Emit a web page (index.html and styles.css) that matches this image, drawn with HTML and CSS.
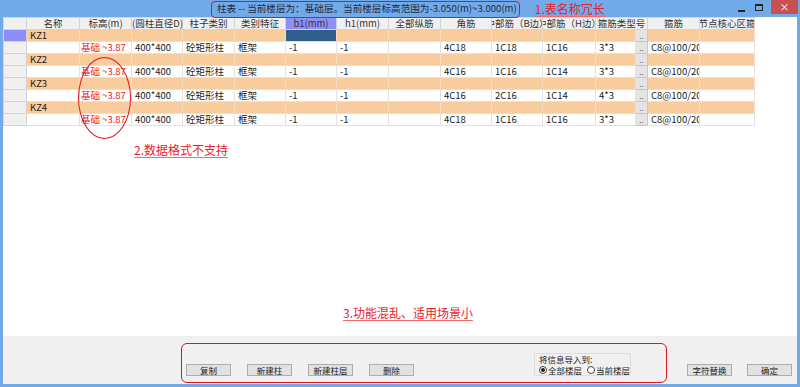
FILE: index.html
```html
<!DOCTYPE html>
<html lang="zh-CN">
<head>
    <meta charset="UTF-8">
    <title>柱表</title>
    <link rel="stylesheet" href="styles.css">
</head>
<body>
    <div class="window">
        <div class="titlebar">
            <span class="title">柱表 -- 当前楼层为：基础层。当前楼层标高范围为-3.050(m)~3.000(m)</span>
            <span class="note note-1">1.表名称冗长</span>
            <div class="controls">
                <span class="ctl-min"></span>
                <span class="ctl-max"></span>
                <span class="ctl-close">×</span>
            </div>
        </div>

        <div class="grid-area">
            <table class="grid">
                <colgroup>
                    <col style="width:23px"><col style="width:53px"><col style="width:52px"><col style="width:51px">
                    <col style="width:52px"><col style="width:51px"><col style="width:51px"><col style="width:52px">
                    <col style="width:52px"><col style="width:51px"><col style="width:51px"><col style="width:53px">
                    <col style="width:40px"><col style="width:12px"><col style="width:52px"><col style="width:55px">
                </colgroup>
                <thead>
                    <tr>
                        <th class="rh"></th>
                        <th>名称</th>
                        <th>标高(m)</th>
                        <th>(圆柱直径D)</th>
                        <th>柱子类别</th>
                        <th>类别特征</th>
                        <th class="sel-col">b1(mm)</th>
                        <th>h1(mm)</th>
                        <th>全部纵筋</th>
                        <th>角筋</th>
                        <th class="clip"><div class="hc">中部筋（B边）</div></th>
                        <th class="clip"><div class="hc">中部筋（H边）</div></th>
                        <th colspan="2">箍筋类型号</th>
                        <th>箍筋</th>
                        <th class="clip"><div class="hc">梁节点核心区箍筋</div></th>
                    </tr>
                </thead>
                <tbody>
                    <tr class="group">
                        <td class="rh rh-sel"></td><td>KZ1</td><td></td><td></td><td></td><td></td><td class="sel-cell"></td><td></td><td></td><td></td><td></td><td></td><td></td><td class="dots">..</td><td></td><td></td>
                    </tr>
                    <tr>
                        <td class="rh"></td><td></td><td class="red">基础 ~3.87</td><td>400*400</td><td>砼矩形柱</td><td>框架</td><td>-1</td><td>-1</td><td></td><td>4C18</td><td>1C18</td><td>1C16</td><td>3*3</td><td class="dots">..</td><td class="clip">C8@100/200</td><td></td>
                    </tr>
                    <tr class="group">
                        <td class="rh"></td><td>KZ2</td><td></td><td></td><td></td><td></td><td></td><td></td><td></td><td></td><td></td><td></td><td></td><td class="dots">..</td><td></td><td></td>
                    </tr>
                    <tr>
                        <td class="rh"></td><td></td><td class="red">基础 ~3.87</td><td>400*400</td><td>砼矩形柱</td><td>框架</td><td>-1</td><td>-1</td><td></td><td>4C16</td><td>1C16</td><td>1C14</td><td>3*3</td><td class="dots">..</td><td class="clip">C8@100/200</td><td></td>
                    </tr>
                    <tr class="group">
                        <td class="rh"></td><td>KZ3</td><td></td><td></td><td></td><td></td><td></td><td></td><td></td><td></td><td></td><td></td><td></td><td class="dots">..</td><td></td><td></td>
                    </tr>
                    <tr>
                        <td class="rh"></td><td></td><td class="red">基础 ~3.87</td><td>400*400</td><td>砼矩形柱</td><td>框架</td><td>-1</td><td>-1</td><td></td><td>4C16</td><td>2C16</td><td>1C14</td><td>4*3</td><td class="dots">..</td><td class="clip">C8@100/200</td><td></td>
                    </tr>
                    <tr class="group">
                        <td class="rh"></td><td>KZ4</td><td></td><td></td><td></td><td></td><td></td><td></td><td></td><td></td><td></td><td></td><td></td><td class="dots">..</td><td></td><td></td>
                    </tr>
                    <tr>
                        <td class="rh"></td><td></td><td class="red">基础 ~3.87</td><td>400*400</td><td>砼矩形柱</td><td>框架</td><td>-1</td><td>-1</td><td></td><td>4C18</td><td>1C16</td><td>1C16</td><td>3*3</td><td class="dots">..</td><td class="clip">C8@100/200</td><td></td>
                    </tr>
                </tbody>
            </table>
        </div>

        <div class="panel">
            <div class="buttons">
                <button>复制</button>
                <button>新建柱</button>
                <button>新建柱层</button>
                <button>删除</button>
            </div>
            <div class="import-box">
                <div class="import-label">将信息导入到:</div>
                <div class="radios">
                    <label><span class="radio on"></span>全部楼层</label>
                    <label><span class="radio"></span>当前楼层</label>
                </div>
            </div>
            <div class="buttons right">
                <button>字符替换</button>
                <button>确定</button>
            </div>
        </div>

        <!-- annotations drawn over the window -->
        <div class="mark mark-title"></div>
        <div class="mark mark-ellipse"></div>
        <div class="mark mark-panel"></div>
        <span class="note note-2">2.数据格式不支持</span>
        <span class="note note-3">3.功能混乱、适用场景小</span>
    </div>
</body>
</html>
```

FILE: styles.css
```css
* {
    margin: 0;
    padding: 0;
    box-sizing: border-box;
}

body {
    font-family: "Noto Sans CJK SC", "Noto Sans", sans-serif;
    background: white;
}

.window {
    position: relative;
    width: 800px;
    height: 387px;
    background: #72a9e9;
    padding: 0 3px 3px 3px;
    display: flex;
    flex-direction: column;
}

.titlebar {
    height: 17px;
    display: flex;
    align-items: center;
    font-size: 9.6px;
    color: #1e2a3a;
}

.title {
    margin-left: 214px;
    line-height: 17px;
}

.controls {
    margin-left: auto;
    display: flex;
    align-items: flex-start;
    height: 17px;
}

.ctl-min {
    width: 7px;
    height: 2px;
    background: #222;
    margin: 10px 10px 0 0;
}

.ctl-max {
    width: 8px;
    height: 7px;
    border: 1px solid #222;
    border-top-width: 2px;
    margin: 4px 8px 0 0;
}

.ctl-close {
    width: 27px;
    height: 14px;
    background: #c75050;
    color: white;
    font-size: 10px;
    line-height: 14px;
    text-align: center;
    margin-right: -1px;
}

.grid-area {
    flex: 1;
    background: white;
    overflow: hidden;
}

.grid {
    border-collapse: collapse;
    table-layout: fixed;
    width: 751px;
    font-size: 9.5px;
    color: #1a1a1a;
}

.grid th,
.grid td {
    height: 12px;
    padding: 0 0 0 3px;
    border: 1px solid #e2e2e2;
    white-space: nowrap;
    line-height: 11px;
    text-align: left;
    font-weight: normal;
}

.grid th {
    background: #f0f0f0;
    border-color: #d4d4d4;
    padding: 0;
    text-align: center;
    color: #333;
}

.grid .clip {
    overflow: hidden;
}

.hc {
    display: flex;
    justify-content: center;
    overflow: hidden;
    white-space: nowrap;
    line-height: 11px;
}

.grid th.sel-col {
    background: #8f8ff6;
}

.grid .rh {
    background: #f0f0f0;
    border-color: #d4d4d4;
}

.grid .rh-sel {
    background: #8c8cf8;
}

.grid tr.group td {
    background: #f9cc9e;
    border-color: #f3dcc4;
}

.grid tr.group td.rh {
    background: #f0f0f0;
    border-color: #d4d4d4;
}

.grid tr.group td.rh-sel {
    background: #8c8cf8;
}

.grid tr.group td.sel-cell {
    background: #2f5f8c;
}

.grid td.red {
    color: #e82020;
    padding-left: 1px;
}

.grid td.dots,
.grid tr.group td.dots {
    background: #e4e4e4;
    border: 1px solid #c8c8c8;
    padding: 0;
    text-align: center;
    font-size: 8px;
    color: #555;
    line-height: 8px;
}

.panel {
    height: 48px;
    background: #f0f0f0;
    display: flex;
    align-items: flex-end;
    padding: 0 0 7px 183px;
    font-size: 8.5px;
    color: #222;
}

.buttons {
    display: flex;
    gap: 16px;
    margin-bottom: 1px;
}

.buttons button {
    width: 45px;
    height: 12px;
    background: #e1e1e1;
    border: 1px solid #adadad;
    font-family: inherit;
    font-size: 8.5px;
    line-height: 10px;
    color: #222;
}

.buttons.right {
    margin-left: 56px;
    gap: 15px;
}

.import-box {
    margin-left: 120px;
    width: 97px;
    height: 23px;
    border: 1px solid #dcdcdc;
    border-radius: 2px;
    padding: 0 0 0 4px;
    margin-bottom: 1px;
    line-height: 10px;
}

.radios {
    display: flex;
    gap: 5px;
    margin-top: 1px;
}

.radios label {
    display: flex;
    align-items: center;
    gap: 1px;
}

.radio {
    width: 8px;
    height: 8px;
    border: 1px solid #444;
    border-radius: 50%;
    background: white;
    display: flex;
    align-items: center;
    justify-content: center;
}

.radio.on::after {
    content: "";
    width: 4px;
    height: 4px;
    border-radius: 50%;
    background: #222;
}

.mark {
    position: absolute;
    border: 1px solid #e0141e;
    pointer-events: none;
}

.mark-title {
    left: 211px;
    top: 1px;
    width: 309px;
    height: 17px;
    border-radius: 4px;
}

.mark-ellipse {
    left: 78px;
    top: 57px;
    width: 53px;
    height: 82px;
    border-radius: 50%;
}

.mark-panel {
    left: 181px;
    top: 343px;
    width: 486px;
    height: 40px;
    border-radius: 6px;
}

.note {
    color: #e8202a;
    font-size: 12px;
    line-height: 14px;
    border-bottom: 1px solid #f06a70;
    white-space: nowrap;
}

.note-1 {
    margin-left: 18px;
    margin-top: 1px;
}

.note-2 {
    position: absolute;
    left: 134px;
    top: 143px;
}

.note-3 {
    position: absolute;
    left: 343px;
    top: 306px;
}
```
